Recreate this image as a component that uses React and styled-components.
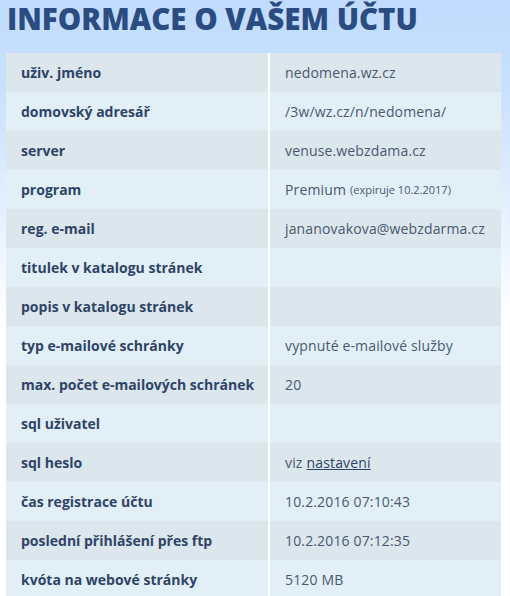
import React from "react";
import styled, { createGlobalStyle } from "styled-components";

const Global = createGlobalStyle`
  html, body { margin: 0; padding: 0; }
  body {
    width: 510px;
    min-height: 596px;
    background: linear-gradient(to bottom, #c0dbfd 0px, #c8e0fd 80px, #e6f1fe 220px, #ffffff 320px);
    font-family: "Open Sans", "DejaVu Sans", sans-serif;
  }
`;

const Page = styled.div`
  padding: 0 9px 0 6px;
`;

const Title = styled.h1`
  margin: 0;
  padding: 0 0 0 1px;
  height: 53px;
  line-height: 38px;
  font-size: 29.5px;
  font-weight: 800;
  color: #2b4c80;
  letter-spacing: 0;
  box-sizing: border-box;
`;

const Table = styled.div`
  display: grid;
  grid-template-columns: 262px 231px;
  column-gap: 2px;
  background: #ffffff;
  width: 495px;
`;

const Cell = styled.div`
  height: 39px;
  display: flex;
  align-items: center;
  padding-left: 15px;
  box-sizing: border-box;
  font-size: 14px;
  letter-spacing: ${(p) => (p.$label ? "0" : "0.15px")};
  background: ${(p) => (p.$dark ? "#dce6ed" : "#e3eff6")};
  color: ${(p) => (p.$label ? "#2e4467" : "#48596f")};
  font-weight: ${(p) => (p.$label ? 700 : 400)};
  white-space: nowrap;
`;

const Small = styled.span`
  font-size: 11px;
  letter-spacing: 0;
  margin-left: 4px;
`;

const Link = styled.a`
  color: #2e4467;
  text-decoration: underline;
  margin-left: 4px;
`;

const rows = [
  ["uživ. jméno", "nedomena.wz.cz"],
  ["domovský adresář", "/3w/wz.cz/n/nedomena/"],
  ["server", "venuse.webzdama.cz"],
  ["program", <>Premium<Small>(expiruje 10.2.2017)</Small></>],
  ["reg. e-mail", "jananovakova@webzdarma.cz"],
  ["titulek v katalogu stránek", ""],
  ["popis v katalogu stránek", ""],
  ["typ e-mailové schránky", "vypnuté e-mailové služby"],
  ["max. počet e-mailových schránek", "20"],
  ["sql uživatel", ""],
  ["sql heslo", <>viz<Link href="#">nastavení</Link></>],
  ["čas registrace účtu", "10.2.2016 07:10:43"],
  ["poslední přihlášení přes ftp", "10.2.2016 07:12:35"],
  ["kvóta na webové stránky", "5120 MB"],
];

export default function App() {
  return (
    <>
      <Global />
      <Page>
        <Title>INFORMACE O VAŠEM ÚČTU</Title>
        <Table>
          {rows.map(([k, v], i) => (
            <React.Fragment key={i}>
              <Cell $label $dark={i % 2 === 0}>{k}</Cell>
              <Cell $dark={i % 2 === 0}>{v}</Cell>
            </React.Fragment>
          ))}
        </Table>
      </Page>
    </>
  );
}
